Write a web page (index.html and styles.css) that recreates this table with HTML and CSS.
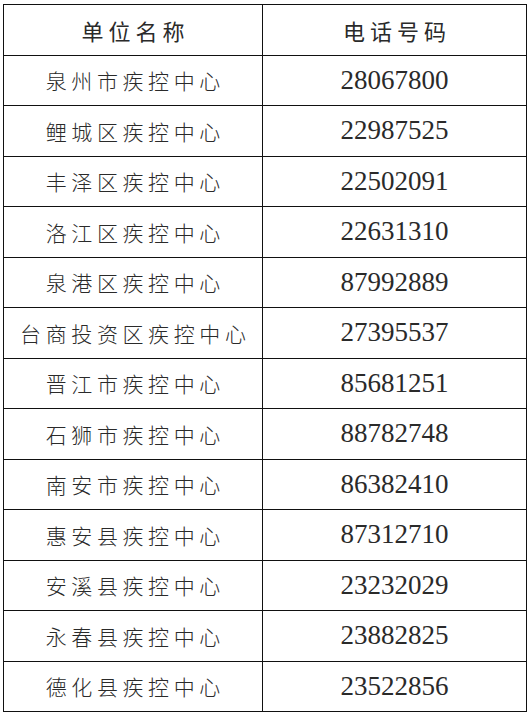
FILE: index.html
```html
<!DOCTYPE html>
<html lang="zh">
<head>
<meta charset="utf-8">
<link rel="stylesheet" href="styles.css">
</head>
<body>
<table class="tbl">
  <tr class="head"><th class="name">单位名称</th><th class="tel">电话号码</th></tr>
  <tr><td class="name">泉州市疾控中心</td><td class="tel">28067800</td></tr>
  <tr><td class="name">鲤城区疾控中心</td><td class="tel">22987525</td></tr>
  <tr><td class="name">丰泽区疾控中心</td><td class="tel">22502091</td></tr>
  <tr><td class="name">洛江区疾控中心</td><td class="tel">22631310</td></tr>
  <tr><td class="name">泉港区疾控中心</td><td class="tel">87992889</td></tr>
  <tr><td class="name">台商投资区疾控中心</td><td class="tel">27395537</td></tr>
  <tr><td class="name">晋江市疾控中心</td><td class="tel">85681251</td></tr>
  <tr><td class="name">石狮市疾控中心</td><td class="tel">88782748</td></tr>
  <tr><td class="name">南安市疾控中心</td><td class="tel">86382410</td></tr>
  <tr><td class="name">惠安县疾控中心</td><td class="tel">87312710</td></tr>
  <tr><td class="name">安溪县疾控中心</td><td class="tel">23232029</td></tr>
  <tr><td class="name">永春县疾控中心</td><td class="tel">23882825</td></tr>
  <tr><td class="name">德化县疾控中心</td><td class="tel">23522856</td></tr>
</table>
</body>
</html>
```
FILE: styles.css
```css
html, body {
  margin: 0;
  padding: 0;
  background: #fff;
}
body {
  padding: 4px 0 0 3px;
}
.tbl {
  border-collapse: collapse;
  width: 524px;
  table-layout: fixed;
  color: #2a2a2a;
}
.tbl th, .tbl td {
  border: 1.5px solid #111;
  height: 49.5px;
  padding: 0;
  text-align: center;
  vertical-align: middle;
}
.tbl th.name, .tbl td.name {
  width: 258px;
}
.name {
  font-family: "Noto Sans CJK SC", sans-serif;
  font-weight: 300;
  font-size: 21px;
  letter-spacing: 4.6px;
  text-indent: 4.6px;
}
.tel {
  font-family: "Liberation Serif", serif;
  font-size: 27px;
  font-weight: 400;
}
.head th {
  font-family: "Noto Sans CJK SC", sans-serif;
  font-weight: 400;
  font-size: 22px;
  letter-spacing: 5px;
  text-indent: 5px;
}
```
